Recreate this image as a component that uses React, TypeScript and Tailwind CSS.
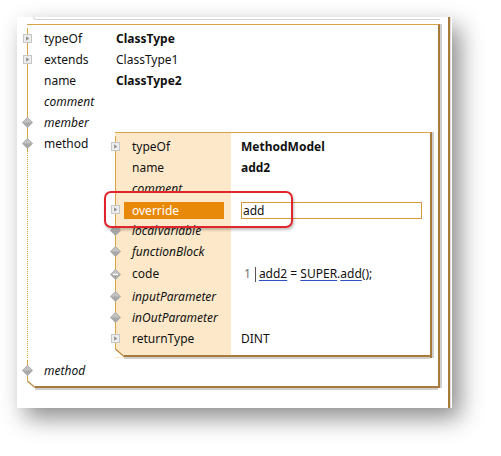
import React from "react";

function ExpandIcon() {
  return (
    <svg width="9" height="9" viewBox="0 0 9 9">
      <rect x="0.5" y="0.5" width="8" height="8" fill="#ededed" stroke="#c6c6c6" />
      <path d="M3.2 2.3 L6.2 4.5 L3.2 6.7 Z" fill="#8c8c8c" />
    </svg>
  );
}

function DiamondIcon({ minus = false }: { minus?: boolean }) {
  return (
    <svg width="11" height="11" viewBox="0 0 11 11">
      <path d="M5.5 0 L11 5.5 L5.5 11 L0 5.5 Z" fill="#a8a8a8" />
      <path d="M5.5 1 L10 5.5 L1 5.5 Z" fill="#c2c2c2" />
      {minus && <path d="M3 5.5 H8" stroke="#ffffff" strokeWidth="1.4" />}
    </svg>
  );
}

type Icon = "expand" | "diamond" | "minus" | null;

function RowIcon({ icon }: { icon: Icon }) {
  return (
    <div className="-ml-[6px] flex w-[11px] shrink-0 items-center justify-center">
      {icon === "expand" && <ExpandIcon />}
      {icon === "diamond" && <DiamondIcon />}
      {icon === "minus" && <DiamondIcon minus />}
    </div>
  );
}

function OuterRow({
  icon,
  label,
  italic,
  value,
  bold,
}: {
  icon: Icon;
  label: string;
  italic?: boolean;
  value?: string;
  bold?: boolean;
}) {
  return (
    <div className="flex h-[21px] items-center border-l border-[#d8a446]">
      <RowIcon icon={icon} />
      <span className={`ml-[11px] w-[72px] shrink-0 ${italic ? "italic" : ""}`}>{label}</span>
      {value && <span className={bold ? "font-bold" : ""}>{value}</span>}
    </div>
  );
}

function InnerRow({
  icon,
  label,
  italic,
  children,
  tall,
  highlight,
}: {
  icon: Icon;
  label: string;
  italic?: boolean;
  children?: React.ReactNode;
  tall?: boolean;
  highlight?: boolean;
}) {
  return (
    <div className={`flex items-center border-l border-[#d8a446] ${tall ? "h-[24px]" : "h-[21px]"}`}>
      <RowIcon icon={icon} />
      <div
        className={`ml-[3px] flex h-[17px] w-[100px] shrink-0 items-center pl-[8px] ${
          highlight ? "mt-[2px] bg-[#e9890a] text-white" : ""
        } ${italic ? "italic" : ""}`}
      >
        {label}
      </div>
      <div className={`ml-[17px] flex items-center ${highlight ? "mt-[2px]" : ""}`}>{children}</div>
    </div>
  );
}

function Corner({ h, w }: { h: number; w: number }) {
  return (
    <svg width={w} height={h} viewBox={`0 0 ${w} ${h}`} className="shrink-0">
      <path d={`M0 0 L${w} ${h} L0 ${h} Z`} fill="#ffffff" />
      <path d={`M0.5 0 L${w} ${h - 0.5}`} stroke="#b8873f" strokeWidth="1.3" />
    </svg>
  );
}

function MethodModel() {
  return (
    <div className="-mt-px flex h-[226px] w-[317px] shrink-0 flex-col border-t border-r-2 border-t-[#d8a446] border-r-[#a87b3c] bg-[linear-gradient(to_right,#fde9c9_116px,#ffffff_116px)] pt-[3px] shadow-[2px_0_0_#cfcfcf]">
      <InnerRow icon="expand" label="typeOf">
        <span className="font-bold">MethodModel</span>
      </InnerRow>
      <InnerRow icon={null} label="name">
        <span className="font-bold">add2</span>
      </InnerRow>
      <InnerRow icon={null} label="comment" italic />
      <InnerRow icon="expand" label="override" highlight>
        <div className="flex h-[17px] w-[181px] items-center border border-[#d39a3e] bg-white pl-[1px]">add</div>
      </InnerRow>
      <InnerRow icon="diamond" label="localVariable" italic />
      <InnerRow icon="diamond" label="functionBlock" italic />
      <InnerRow icon="minus" label="code" tall>
        <span className="ml-[3px] text-[#777]">1</span>
        <span className="ml-[4px] h-[15px] w-px bg-[#555]" />
        <span className="ml-[3px] underline decoration-[#2f4fc4] underline-offset-2">add2</span>
        <span className="whitespace-pre"> = </span>
        <span className="underline decoration-[#2f4fc4] underline-offset-2">SUPER</span>
        <span>.</span>
        <span className="underline decoration-[#2f4fc4] underline-offset-2">add</span>
        <span>();</span>
      </InnerRow>
      <InnerRow icon="diamond" label="inputParameter" italic />
      <InnerRow icon="diamond" label="inOutParameter" italic />
      <InnerRow icon="expand" label="returnType">
        <span>DINT</span>
      </InnerRow>
      <div className="flex h-[8px]">
        <Corner w={9} h={8} />
        <div className="flex-1 border-b-2 border-[#a87b3c] shadow-[0_2px_0_#cfcfcf]" />
      </div>
    </div>
  );
}

export default function App() {
  return (
    <div
      className="min-h-[456px] bg-white pl-[17px] pt-[17px] text-[12px] leading-none text-[#111]"
      style={{ fontFamily: '"Noto Sans", "Open Sans", sans-serif' }}
    >
      <div className="relative flex h-[391px] w-[435px] bg-white pl-[10px] shadow-[8px_10px_22px_rgba(0,0,0,0.45)]">
        <div className="flex w-[413px] shrink-0 flex-col">
          <div className="ml-[6px] h-[3px] w-[407px] rounded-bl-[3px] border-b border-l border-[#d6d6d6]" />
          {/* ClassType box */}
          <div className="mt-[4px] flex h-[364px] flex-col border-t border-r-2 border-t-[#d8a446] border-r-[#a87b3c] bg-white pt-[3px] shadow-[2px_0_0_#cfcfcf]">
            <OuterRow icon="expand" label="typeOf" value="ClassType" bold />
            <OuterRow icon="expand" label="extends" value="ClassType1" />
            <OuterRow icon={null} label="name" value="ClassType2" bold />
            <OuterRow icon={null} label="comment" italic />
            <OuterRow icon="diamond" label="member" italic />
            <div className="flex pb-[2px]">
              <div className="flex w-px shrink-0 flex-col">
                <div className="h-[18px] bg-[#d8a446]" />
                <div className="flex-1 border-l border-dotted border-[#d8a446]" />
              </div>
              <div className="flex h-[21px] items-center">
                <RowIcon icon="diamond" />
              </div>
              <div className="ml-[11px] flex h-[21px] w-[71px] shrink-0 items-center">method</div>
              <MethodModel />
            </div>
            <OuterRow icon="diamond" label="method" italic />
            <div className="flex h-[7px]">
              <Corner w={8} h={7} />
              <div className="flex-1 border-b-2 border-[#a87b3c] shadow-[0_2px_0_#cfcfcf]" />
            </div>
          </div>
        </div>
        <div className="ml-[8px] w-[2px] bg-[#a87b3c]" />
        <div className="w-px bg-[#dcdcdc]" />
        {/* annotation */}
        <div className="absolute left-[87px] top-[174px] h-[37px] w-[189px] rounded-[7px] border-2 border-[#e0262b] shadow-[1px_2px_3px_rgba(0,0,0,0.25)]" />
      </div>
    </div>
  );
}
